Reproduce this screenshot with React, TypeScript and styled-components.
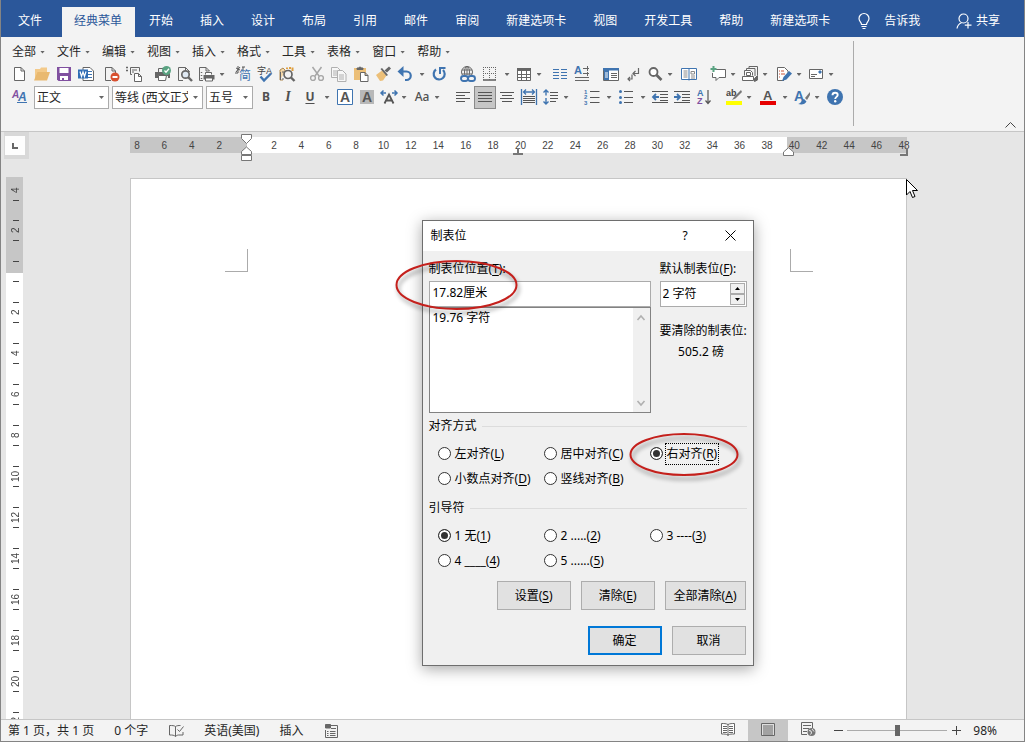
import React from 'react';
import styled, { createGlobalStyle, css } from 'styled-components';

const GREY = '#666666';
const BLUE = '#3f74b0';
const UI_FONT = '"Noto Sans", "Noto Sans CJK SC", sans-serif';

const GlobalStyle = createGlobalStyle`
  *, *::before, *::after { box-sizing: border-box; }
  body { margin: 0; font: 12px/18px ${UI_FONT}; color: #262626; }
  button, input, select { font: inherit; color: inherit; margin: 0; }
  button { border: 0; padding: 0; background: none; cursor: default; }
  svg { display: block; flex: none; overflow: visible; }
  u { text-underline-offset: 2px; }
`;

/* ---------- window frame ---------- */

const Window = styled.div`
  display: flex;
  flex-direction: column;
  height: 100vh;
  min-height: 600px;
  overflow: hidden;
  background: #f3f3f3;
  border: 1px solid #848484;
  border-top: 0;
`;

/* ---------- ribbon tabs ---------- */

const TabBar = styled.nav`
  display: flex;
  flex: none;
  height: 37px;
  padding-top: 7px;
  background: #2b579a;
  color: #fff;
`;

const FileTab = styled.button`
  padding: 0 20px 3px 17px;
`;

const ActiveTab = styled.button`
  padding: 0 13px 3px 12px;
  background: #f3f3f3;
  color: #2b579a;
`;

const TabList = styled.div`
  display: flex;
  gap: 27px;
  padding-left: 14px;
`;

const Tab = styled.button`
  padding-bottom: 3px;
  white-space: nowrap;
`;

const TellMe = styled(Tab)`
  display: flex;
  align-items: center;
  gap: 12px;
  margin-left: 26px;
`;

const Share = styled(Tab)`
  display: flex;
  align-items: center;
  gap: 4px;
  margin: 0 24px 0 auto;
`;

/* ---------- ribbon body ---------- */

const Ribbon = styled.div`
  display: flex;
  flex: none;
  height: 95px;
  border-bottom: 1px solid #c6c6c6;
`;

const Tools = styled.div`
  flex: none;
  width: 853px;
  height: 85px;
  margin-top: 4px;
  border-right: 1px solid #ababab;
`;

const MenuRow = styled.div`
  display: flex;
  height: 22px;
  gap: 12px;
  padding-left: 11px;
`;

const MenuButton = styled.button`
  display: flex;
  align-items: center;
  gap: 4px;
`;

const Arrow = styled.span`
  flex: none;
  width: 5px;
  height: 3px;
  background: ${GREY};
  clip-path: polygon(0 0, 100% 0, 50% 100%);
`;

const ToolRow = styled.div`
  display: flex;
  align-items: center;
  height: 23px;
  padding-left: 8px;
`;

const ToolButton = styled.button<{ $on?: boolean }>`
  display: flex;
  flex: none;
  align-items: center;
  justify-content: center;
  width: 22px;
  height: 23px;
  padding-bottom: 1px;
  ${(p) =>
    p.$on &&
    css`
      background: #c6c6c6;
      border: 1px solid #8a8a8a;
    `}
`;

const DropButton = styled.button`
  display: flex;
  flex: none;
  align-items: center;
  justify-content: center;
  width: 8px;
  height: 22px;
`;

const Gap = styled.span<{ $w: number }>`
  flex: none;
  width: ${(p) => p.$w}px;
`;

const LetterButton = styled(ToolButton)<{ $look: 'bold' | 'italic' | 'underline' | 'case' }>`
  color: #505050;
  font-weight: 700;
  ${(p) => p.$look === 'italic' && css`font-family: "Liberation Serif", serif; font-style: italic; font-size: 14px;`}
  ${(p) => p.$look === 'underline' && css`text-decoration: underline; text-underline-offset: 2px;`}
  ${(p) => p.$look === 'case' && css`font-weight: 500;`}
`;

const ComboBox = styled.span<{ $w: number }>`
  position: relative;
  display: flex;
  flex: none;
  width: ${(p) => p.$w}px;
  height: 23px;
  margin-left: 3px;
  background: #fff;
  border: 1px solid #ababab;

  select {
    appearance: none;
    width: 100%;
    padding: 0 14px 0 2px;
    border: 0;
    background: transparent;
    color: #262626;
  }

  ${Arrow} {
    position: absolute;
    top: 9px;
    right: 4px;
  }
`;

const Collapse = styled.button`
  align-self: flex-end;
  margin: 0 8px 3px auto;
`;

/* ---------- work area ---------- */

const Workspace = styled.main`
  position: relative;
  display: grid;
  flex: 1 1 0;
  grid-template-columns: 28px minmax(0, 1fr);
  grid-template-rows: 45px minmax(0, 1fr);
  min-height: 0;
  background: #e6e6e6;
`;

const TabKind = styled.button`
  display: flex;
  align-items: center;
  justify-content: center;
  width: 25px;
  height: 27px;
  margin-left: 3px;
  background: #fdfdfd;
  border: 4px solid #d8d8d8;
  border-left-width: 1px;
`;

const Lane = styled.div`
  display: flex;
  justify-content: center;
  min-width: 0;
  padding-right: 16px;
`;

const Ruler = styled.div`
  position: relative;
  display: flex;
  justify-content: space-between;
  width: 777px;
  max-width: 100%;
  height: 16px;
  margin-top: 5px;
  padding: 0 3px 0 7px;
  background: linear-gradient(
    to right,
    #c6c6c6 117px,
    #fff 117px,
    #fff calc(100% - 120px),
    #c6c6c6 calc(100% - 120px)
  );
  font: 10px/18px "Liberation Sans", sans-serif;
  color: #444;
`;

const RulerNumber = styled.span`
  display: flex;
  justify-content: center;
  width: 0;
`;

const Marker = styled.svg<{ $left: string; $top: number }>`
  position: absolute;
  left: ${(p) => p.$left};
  top: ${(p) => p.$top}px;
`;

const SideRuler = styled.div`
  width: 17px;
  min-height: 0;
  margin-left: 5px;
  overflow: hidden;
  background: linear-gradient(#c6c6c6 96px, #fff 96px);
  font: 10px/14px "Liberation Sans", sans-serif;
  color: #444;
`;

const SideCell = styled.div<{ $first?: boolean }>`
  display: flex;
  flex-direction: column;
  align-items: center;
  justify-content: space-between;
  height: ${(p) => (p.$first ? 33 : 41)}px;
  padding: ${(p) => (p.$first ? '3px 0 9px' : '10px 0')};
  padding-left: 3px;

  span {
    display: flex;
    align-items: center;
    justify-content: center;
    flex: 1;
    writing-mode: vertical-rl;
    transform: rotate(180deg);
  }
  &::before,
  &::after {
    content: '';
    flex: none;
    width: 6px;
    height: 1px;
    background: #444;
  }
  &::before {
    visibility: ${(p) => (p.$first ? 'hidden' : 'visible')};
  }
`;

const Page = styled.div`
  display: flex;
  position: relative;
  align-items: flex-start;
  justify-content: space-between;
  width: 777px;
  max-width: 100%;
  margin-top: 1px;
  padding: 70px 93px 0 94px;
  background: #fff;
  border: 1px solid #c6c6c6;
  border-bottom: 0;
`;

const Crop = styled.span<{ $side: 'left' | 'right' }>`
  width: 23px;
  height: 23px;
  border-bottom: 1px solid #ababab;
  ${(p) => (p.$side === 'left' ? 'border-right' : 'border-left')}: 1px solid #ababab;
`;

const Pointer = styled.svg`
  position: absolute;
  top: 0;
  right: -12px;
`;

/* ---------- dialog ---------- */

const Dialog = styled.section`
  position: absolute;
  top: 88px;
  left: calc(50% - 91px);
  width: 332px;
  padding-bottom: 10px;
  background: #f0f0f0;
  border: 1px solid #6e6e6e;
  box-shadow: 0 3px 14px rgba(0, 0, 0, 0.35);
  color: #000;
`;

const TitleBar = styled.header`
  display: flex;
  align-items: center;
  height: 30px;
  padding-left: 8px;
  background: #fff;

  h2 {
    flex: 1;
    margin: 0;
    font-size: 12px;
    line-height: 18px;
    font-weight: 400;
  }
  button {
    display: flex;
    align-items: center;
    justify-content: center;
    width: 45px;
    height: 30px;
    padding-bottom: 1px;
  }
`;

const Body = styled.form`
  padding: 9px 6px 0;
`;

const Fields = styled.div`
  display: flex;
  gap: 9px;
`;

const PositionField = styled.div`
  flex: 1;
  min-width: 0;
`;

const DefaultField = styled.div`
  flex: none;
  width: 87px;
  white-space: nowrap;
`;

const FieldLabel = styled.label`
  display: block;
  margin-bottom: 3px;
`;

const TextBox = styled.input`
  display: block;
  width: 100%;
  height: 26px;
  padding: 0 3px 4px;
  background: #fff;
  border: 1px solid #ababab;
  outline: 0;
`;

const ListBox = styled.div`
  display: flex;
  height: 106px;
  background: #fff;
  border: 1px solid #828282;

  select {
    flex: 1;
    min-width: 0;
    padding: 0;
    border: 0;
    outline: 0;
    overflow: hidden;
    background: transparent;
  }
  option {
    min-height: 18px;
    padding: 0 3px 1px;
  }
`;

const ScrollRail = styled.div`
  display: flex;
  flex-direction: column;
  align-items: center;
  justify-content: space-between;
  width: 17px;
  padding: 7px 1px 6px 0;
  background: #f0f0f0;
`;

const SpinBox = styled.div`
  display: flex;
  align-items: center;
  height: 26px;
  padding-right: 1px;
  background: #fff;
  border: 1px solid #ababab;

  input {
    flex: 1;
    width: 0;
    height: 22px;
    padding: 0 2px 2px;
    border: 0;
    outline: 0;
    background: transparent;
  }
`;

const SpinButtons = styled.div`
  display: grid;
  grid-template-rows: 11px 11px;

  button {
    display: flex;
    align-items: center;
    justify-content: center;
    width: 15px;
    background: #f0f0f0;
    border: 1px solid #ababab;
  }
`;

const ClearNote = styled.p`
  margin: 15px 0 3px;
`;

const ClearValue = styled.p`
  margin: 0;
  text-align: center;
  padding-right: 4px;
`;

const Group = styled.fieldset`
  min-width: 0;
  margin: 0;
  padding: 4px 0;
  border: 0;
`;

const GroupTitle = styled.legend`
  display: flex;
  align-items: center;
  gap: 5px;
  width: 100%;
  padding: 4px 0 0;

  &::after {
    content: '';
    flex: 1;
    height: 1px;
    background: #dcdcdc;
  }
`;

const Choices = styled.div`
  display: grid;
  grid-template-columns: 106px 106px 1fr;
  grid-auto-rows: 25px;
  padding: 2px 0 0 9px;
`;

const Choice = styled.label<{ $focus?: boolean }>`
  display: flex;
  align-items: center;
  gap: 4px;
  white-space: nowrap;

  input {
    appearance: none;
    flex: none;
    width: 13px;
    height: 13px;
    background: #fff;
    border: 1px solid #333;
    border-radius: 50%;
  }
  input:checked {
    background: #333;
    box-shadow: inset 0 0 0 2px #fff;
  }
  span {
    ${(p) => p.$focus && css`outline: 1px dotted #000; outline-offset: 1px;`}
  }
`;

const Actions = styled.div<{ $top: number }>`
  display: flex;
  justify-content: flex-end;
  gap: 10px;
  margin: ${(p) => p.$top}px 1px 0 0;
`;

const PushButton = styled.button<{ $primary?: boolean }>`
  min-width: 74px;
  height: 29px;
  padding: 0 8px;
  background: #e1e1e1;
  border: ${(p) => (p.$primary ? '2px solid #0078d7' : '1px solid #adadad')};
`;

const Ring = styled.svg<{ $left: number; $top: number }>`
  position: absolute;
  left: ${(p) => p.$left}px;
  top: ${(p) => p.$top}px;
  pointer-events: none;
  filter: drop-shadow(2px 4px 2px rgba(0, 0, 0, 0.4));
`;

/* ---------- status bar ---------- */

const StatusBar = styled.footer`
  display: flex;
  flex: none;
  align-items: center;
  height: 22px;
  padding-left: 7px;
  border-top: 1px solid #c6c6c6;
`;

const StatusGroup = styled.div`
  display: flex;
  flex: 1;
  align-items: center;
  gap: 20px;
  white-space: nowrap;
`;

const ViewButton = styled.button<{ $on?: boolean }>`
  display: flex;
  align-items: center;
  justify-content: center;
  width: 40px;
  height: 21px;
  padding-bottom: 3px;
  background: ${(p) => (p.$on ? '#c6c6c6' : 'transparent')};
`;

const ZoomButton = styled.button`
  display: flex;
  align-items: center;
  justify-content: center;
  width: 12px;
  height: 21px;
`;

const ZoomSlider = styled.input`
  appearance: none;
  width: 100px;
  height: 12px;
  margin: 0 3px;
  background: linear-gradient(#ababab, #ababab) center / 100% 1px no-repeat;

  &::-webkit-slider-thumb {
    appearance: none;
    width: 5px;
    height: 11px;
    background: #666;
  }
`;

const ZoomValue = styled.span`
  margin: 0 27px 0 11px;
`;

/* ---------- icons ---------- */

const L = 'Liberation Sans, sans-serif';

const glyphs = {
  blank: <path d="M2.5 1.5h6.5l3.5 3.5v9.5h-10zM9 1.5v3.5h3.5" fill="#fff" />,
  open: (
    <g stroke="none">
      <path d="M1 14V3h5l1-1.5h6V6" fill="#f3ca8a" />
      <path d="M0 14.5L3.5 6H16l-3 8.5z" fill="#e9b970" />
    </g>
  ),
  save: (
    <g stroke="none">
      <path d="M1 1h14v14H2.5L1 13.5z" fill="#8050a0" />
      <path d="M3.5 2h9v5h-9zM4 10h8v4H8v-2H6v2H4z" fill="#fff" />
    </g>
  ),
  word: (
    <>
      <path d="M5 1.5h7l3.5 3.5v9.5H5z" fill="#fff" />
      <path d="M10 5.5h4M10 8.5h4M10 11.5h4" stroke={BLUE} />
      <path d="M0 3.5h10v9H0z" fill="#2f6db5" stroke="none" />
      <path d="M2 5.5l1.500 5L5 6l1.500 4.500 1.500-5" stroke="#fff" strokeWidth="1.2" />
    </>
  ),
  docRemove: (
    <>
      <path d="M7 14.5H1.500v-13H8l3.500 3.500v2M8 1.5v3.500h3.500" />
      <circle cx="11" cy="11" r="4.5" fill="#d8502f" stroke="none" />
      <path d="M8.5 11h5" stroke="#fff" strokeWidth="2" />
    </>
  ),
  docGroup: (
    <>
      <path d="M0 1.5h2M0 4.5h2" strokeWidth="1.5" />
      <path d="M6 8.5H4.500v-7h9v4" />
      <path d="M6 4h5M6 6h2" />
      <path d="M8.5 7.5h4l3 3v5h-7zM12.5 7.5v3h3" fill="#fff" />
    </>
  ),
  printCheck: (
    <>
      <path d="M3.5 6V2.5H9" />
      <path d="M0 6h15v6h-2v-2H3v2H0z" fill={GREY} stroke="none" />
      <path d="M3.5 9.5h8l-1 5h-7z" fill="#fff" />
      <circle cx="11.5" cy="4.5" r="4.5" fill="#5aa382" stroke="none" />
      <path d="M9.5 4.5l1.500 1.700 3-3.400" stroke="#fff" strokeWidth="1.3" />
    </>
  ),
  preview: (
    <>
      <path d="M6 14.5H1.500v-13h7l4 4V6M8.5 1.5v4h4" />
      <circle cx="8.5" cy="8.5" r="3.7" fill="#dfe9f3" strokeWidth="1.7" />
      <path d="M11 11l4 4" strokeWidth="2.4" />
    </>
  ),
  printDoc: (
    <>
      <path d="M4 14.5H.5v-13H7l3.500 3.500M7 1.5v3.500h3.500" />
      <path d="M2.5 6v1M2.5 9v1M2.5 12v1" strokeWidth="1.5" />
      <path d="M4.5 9h11v4.500h-11z" fill={GREY} stroke="none" />
      <path d="M6.5 8.5v-2h6v2M6.5 12h7v3h-7z" fill="#fff" />
    </>
  ),
  simplify: (
    <>
      <path d="M1 2l4 2M5 1L1 6M3 0v7M0 7h3" stroke="#555" />
      <path d="M7 1h3M8 1v3" stroke="#555" />
      <text x="4" y="14" fontSize="12" fill={BLUE} stroke="none" fontFamily="Noto Sans CJK SC, sans-serif">简</text>
    </>
  ),
  spelling: (
    <>
      <text x="0" y="8" fontSize="9" fill="#444" stroke="none" fontFamily="Noto Sans CJK SC, sans-serif">字</text>
      <text x="9" y="8" fontSize="9" fill="#444" stroke="none" fontFamily={L}>A</text>
      <path d="M3.5 10.5l3.500 4 7-7" stroke={BLUE} strokeWidth="2.4" />
    </>
  ),
  research: (
    <>
      <path d="M1 14V4l3-2 2 2v2M4 14H1" fill="#f3d7a8" stroke="#b08a50" />
      <path d="M8 3V1.500M11 3V1M13.500 5V1.500" stroke="#e0a040" strokeWidth="2" />
      <path d="M1.500 6v8M4 5v2M4 12v2" />
      <circle cx="9" cy="8.500" r="4" fill="#f3f3f3" strokeWidth="1.700" />
      <path d="M12 11.500l3.500 3.500" strokeWidth="2.400" />
    </>
  ),
  cut: (
    <g stroke="#a6a6a6">
      <path d="M3.500 1l6.500 9M12.500 1L6 10" strokeWidth="1.500" />
      <circle cx="4" cy="12" r="2.400" strokeWidth="1.400" />
      <circle cx="12" cy="12" r="2.400" strokeWidth="1.400" />
    </g>
  ),
  copy: (
    <g stroke="#b0b0b0">
      <path d="M.5 1.500h6l3 3v7h-9z" fill="#f7f7f7" />
      <path d="M2 5h4M2 7h4M2 9h4" />
      <path d="M6.500 4.500h5l3.500 3.500v7.500H6.500z" fill="#f7f7f7" />
      <path d="M8 9h5M8 11h5M8 13h5" />
    </g>
  ),
  paste: (
    <>
      <path d="M1 2h12v12H1z" fill="#ecbf78" stroke="none" />
      <path d="M4 3.500V2h2a1 1 0 012 0h2v1.500z" fill={GREY} stroke={GREY} />
      <path d="M7.500 6.500h4.500l3 3v6H7.500zM12 6.500v3h3" fill="#fff" />
    </>
  ),
  brush: (
    <g stroke="none">
      <path d="M1 9l6-4.500 4.500 5L8 14.500l-3 .5z" fill="#ecbf78" />
      <path d="M5.500 3l1.500-1 6 7-1.500 1z" fill={GREY} />
      <path d="M9.500 4.500L14 .5l2 2-4 4z" fill={GREY} />
    </g>
  ),
  undo: (
    <>
      <path d="M3 5.500h6.500a4 4 0 010 8.500H8" stroke={BLUE} strokeWidth="2.200" />
      <path d="M6.500 0v11L.5 5.500z" fill={BLUE} stroke="none" />
    </>
  ),
  redo: (
    <>
      <path d="M5 3.500a5.500 5.500 0 107 .5" stroke={BLUE} strokeWidth="2.200" />
      <path d="M9 8V2h5.500" stroke={BLUE} strokeWidth="2" />
    </>
  ),
  link: (
    <>
      <circle cx="7" cy="6" r="5.500" />
      <ellipse cx="7" cy="6" rx="2.500" ry="5.500" />
      <path d="M2 4h10M2 8h10M7 .5v10" />
      <path d="M1 9h15v6H1z" fill="#f3f3f3" stroke="none" />
      <rect x="1" y="10" width="7" height="5" rx="2.500" stroke={BLUE} strokeWidth="1.900" />
      <rect x="8" y="10" width="7" height="5" rx="2.500" stroke={BLUE} strokeWidth="1.900" />
    </>
  ),
  borders: (
    <>
      <path d="M1.500 1v13M7.500 1v13M13.500 1v13M1 1.500h13M1 7.500h13" strokeDasharray="1 1" />
      <path d="M1 14h13" strokeWidth="1.600" />
    </>
  ),
  table: (
    <>
      <path d="M1.500 2.500h13v12h-13z" fill="#fff" />
      <path d="M1 2h14v3H1z" fill={GREY} stroke="none" />
      <path d="M1.500 8.500h13M1.500 11.500h13M5.500 5v9M10.500 5v9" />
    </>
  ),
  columns: <path d="M1 3.500h6M1 6.500h6M1 9.500h6M1 12.500h6M9 3.500h6M9 6.500h6M9 9.500h6M9 12.500h6" stroke={BLUE} strokeWidth="1.200" />,
  dropCap: (
    <>
      <text x="0" y="8" fontSize="11" fontWeight="700" fill={BLUE} stroke="none" fontFamily={L}>A</text>
      <path d="M9 2.500h6M9 7.500h6M1 11.500h14M1 14.500h14M13.500 0v5M13.500 6v4" />
    </>
  ),
  navPane: (
    <>
      <path d="M.5 2.500h15v12H.5z" fill="#fff" />
      <path d="M0 2h16v2.500H0zM1 4h5v10H1z" fill={BLUE} stroke="none" />
      <path d="M2 7h3M2 9h3M2 11h3" stroke="#fff" />
      <path d="M8 7.500h6M8 9.500h6M8 11.500h6" />
    </>
  ),
  marks: (
    <>
      <path d="M13.500 2v5.500H8M10.500 5L8 7.500l2.500 2.500" strokeWidth="1.200" />
      <path d="M7 8.500v4.500H3M5 11l-2 2 2 2" strokeWidth="1.200" />
    </>
  ),
  zoom: (
    <>
      <circle cx="6.500" cy="6" r="4" fill="#fff" strokeWidth="1.800" />
      <path d="M9.500 9l5 5" strokeWidth="2.600" />
    </>
  ),
  book: (
    <>
      <path d="M.5 2.500h15v11H.5zM8 2.500v12" stroke={BLUE} fill="#fff" />
      <path d="M2.500 5h4M2.500 7h4M2.500 9h4M2.500 11h4M10 5.500h3.500v2.500H10zM10 10h4M10 12h4" stroke="#8a8a8a" />
    </>
  ),
  comment: (
    <>
      <path d="M5.500 3.500h10v8H9l-3 3v-3H2.500V7" fill="#fff" />
      <path d="M3.500 0v6M.5 3h6" stroke="#5aa382" strokeWidth="2" />
    </>
  ),
  merge: (
    <>
      <path d="M7 2V.5h8.500V9M4.500 4.500v-2h8.500V10" />
      <path d="M2.500 9.500v-5h6l2 2v3M.5 10.500h11v4H.5z" fill="#fff" />
      <path d="M4.500 6.500h4v3h-4z" />
      <path d="M12.500 12.500l3-3v4.500l-3 1.500z" fill={GREY} />
    </>
  ),
  review: (
    <>
      <path d="M8 14.500H1.500v-13h7l3.500 3.500v2" fill="#fff" />
      <path d="M3 5h1M3 8h1M3 11h1M5 5h3M5 8h4" stroke="#c8553d" strokeWidth="1.200" />
      <path d="M6 15l1.500-4L13 5l3 2.500-5.500 6z" fill={BLUE} stroke="none" />
    </>
  ),
  mail: (
    <>
      <path d="M1.500 3.500h13v9h-13z" fill="#fff" />
      <path d="M3 8.500h6M3 10.500h4" />
      <path d="M11 5h2v2h-2z" fill={BLUE} stroke={BLUE} />
    </>
  ),
  styles: (
    <>
      <text x="0" y="9" fontSize="10" fontStyle="italic" fontWeight="700" fill="#8050a0" stroke="none" fontFamily={L}>A</text>
      <text x="6" y="12" fontSize="12" fontStyle="italic" fontWeight="700" fill={BLUE} stroke="none" fontFamily={L}>A</text>
      <path d="M5 13.500h10" stroke={BLUE} />
    </>
  ),
  charBorder: (
    <>
      <path d="M.5 .5h15v15H.5z" fill="#fff" stroke={BLUE} />
      <text x="3" y="13" fontSize="14" fontWeight="700" fill="#555" stroke="none" fontFamily={L}>A</text>
    </>
  ),
  charShade: (
    <>
      <path d="M1 1h14v14H1z" fill="#b8b8b8" stroke="none" />
      <text x="3" y="13" fontSize="14" fontWeight="700" fill="#555" stroke="none" fontFamily={L}>A</text>
    </>
  ),
  charScale: (
    <>
      <path d="M3.500 14.500L8 5.500l4.500 9M5.500 11.500h5" strokeWidth="1.800" stroke="#555" />
      <path d="M0 4h5M11 4h5M2.500 1.500L0 4l2.500 2.500M13.500 1.500L16 4l-2.500 2.500" stroke={BLUE} strokeWidth="1.500" />
    </>
  ),
  alignLeft: <path d="M1 3.500h14M1 6.500h9M1 9.500h14M1 12.500h9" stroke="#555" />,
  justify: <path d="M1 3.500h14M1 6.500h14M1 9.500h14M1 12.500h14" stroke="#555" />,
  alignCenter: <path d="M1 3.500h14M3 6.500h10M1 9.500h14M3 12.500h10" stroke="#555" />,
  distribute: (
    <>
      <path d="M.5 0v16M15.500 0v16M3 3h10M5 .5L2.500 3 5 5.500M11 .5L13.500 3 11 5.500" stroke={BLUE} strokeWidth="1.300" />
      <path d="M2 7.500h12M2 9.500h12M2 11.500h12M2 13.500h12" stroke="#555" />
    </>
  ),
  lineSpacing: (
    <>
      <path d="M3 1v5.500M3 9v6M.5 3.500L3 1l2.500 2.500M.5 12.500L3 15l2.500-2.500" stroke={BLUE} strokeWidth="1.400" />
      <path d="M7 3.500h8M7 6.500h8M7 9.500h8M7 12.500h6" stroke="#555" />
    </>
  ),
  numbers: (
    <>
      <g fontSize="6" fill={BLUE} stroke="none" fontFamily={L} fontWeight="700">
        <text x="0" y="5">1</text>
        <text x="0" y="10">2</text>
        <text x="0" y="16">3</text>
      </g>
      <path d="M6 2.500h9.500M6 8.500h9.500M6 13.500h9.500" stroke="#555" />
    </>
  ),
  bullets: (
    <>
      <g fill={BLUE} stroke="none">
        <circle cx="2.500" cy="2.500" r="1.500" />
        <circle cx="2.500" cy="8.500" r="1.500" />
        <circle cx="2.500" cy="13.500" r="1.500" />
      </g>
      <path d="M6 2.500h9M6 8.500h9M6 13.500h9" stroke="#555" />
    </>
  ),
  outdent: (
    <>
      <path d="M0 2.500h16M8 5.500h8M8 8.500h8M8 11.500h8M0 13.500h16" stroke="#555" />
      <path d="M1 8h6M4 5L1 8l3 3" stroke={BLUE} strokeWidth="1.800" />
    </>
  ),
  indent: (
    <>
      <path d="M0 2.500h16M8 5.500h8M8 8.500h8M8 11.500h8M0 13.500h16" stroke="#555" />
      <path d="M0 8h6M3 5l3 3-3 3" stroke={BLUE} strokeWidth="1.800" />
    </>
  ),
  sort: (
    <>
      <text x="1" y="7" fontSize="9" fontWeight="700" fill={BLUE} stroke="none" fontFamily={L}>A</text>
      <text x="1" y="15" fontSize="9" fontWeight="700" fill="#8050a0" stroke="none" fontFamily={L}>Z</text>
      <path d="M12 1v13M9.500 11.500L12 14.500l2.500-3" stroke="#555" strokeWidth="1.200" />
    </>
  ),
  highlight: (
    <>
      <text x="0" y="7" fontSize="9" fontWeight="700" fill="#444" stroke="none" fontFamily={L}>ab</text>
      <path d="M15 1l-7 7-2 3 3.500-1.500L16 3z" fill="#777" stroke="none" />
      <path d="M0 12h16v4H0z" fill="#ffff00" stroke="none" />
    </>
  ),
  fontColor: (
    <>
      <text x="3" y="11" fontSize="13" fontWeight="700" fill="#555" stroke="none" fontFamily={L}>A</text>
      <path d="M0 12h16v4H0z" fill="#e60000" stroke="none" />
    </>
  ),
  effects: (
    <>
      <text x="0" y="12" fontSize="14" fontWeight="700" fill={BLUE} stroke="none" fontFamily={L}>A</text>
      <path d="M16 3l-5 6 2 2 3-5z" fill="#777" stroke="none" />
      <path d="M4 15c3 0 3-4 6-5l2.500 2.500C11 15.500 8 16 4 15z" fill={BLUE} stroke="none" />
    </>
  ),
  help: (
    <>
      <circle cx="8" cy="8" r="8" fill={BLUE} stroke="none" />
      <path d="M5.500 6.200c0-3.400 5.200-3.200 5.200-.2 0 1.800-2.500 2-2.500 4" stroke="#fff" strokeWidth="1.900" />
      <circle cx="8.200" cy="12.200" r="1.200" fill="#fff" stroke="none" />
    </>
  ),
  bulb: (
    <g stroke="#fff" strokeWidth="1.200">
      <path d="M5.500 11.500c0-2.500-2.500-3-2.500-6a5 5 0 0110 0c0 3-2.500 3.500-2.500 6zM5.500 13.500h5M6.500 15.500h3" />
    </g>
  ),
  person: (
    <g stroke="#fff" strokeWidth="1.200">
      <circle cx="7.500" cy="5.500" r="4.500" />
      <path d="M1 15.500c.5-3.500 2.500-5 4.500-5.800M12 9v6.500M8.800 12.200h6.700" />
    </g>
  ),
  proof: <path d="M7.500 3.500c-1.500-1-3-1-6-1v9.500c3 0 4.500 0 6 1.500V3.500c1.500-1 3-1 5-1M7.500 13.500c1-1 2-1.500 3-1.500h4.500V9M9.500 6.500l2 2 4-5" />,
  macro: (
    <>
      <path d="M6 2.500h8.500v12h-12V7" />
      <path d="M2.500 5V1.500h5V5z" fill={GREY} />
      <path d="M4 8.500h1.500M7 8.500h5.500M4 10.500h1.500M7 10.500h5.500M4 12.500h1.500M7 12.500h5.500M8 5.500h5" />
    </>
  ),
  readView: (
    <>
      <path d="M8 3.500c-2-1-4-1-6.500-1v10.500c3 0 4.500 0 6.500 1 2-1 3.500-1 6.500-1V2.500c-2.500 0-4.500 0-6.500 1z" fill="#fff" />
      <path d="M8 3.500V15M3 5.500h4M3 7.500h4M3 9.500h4M3 11.500h4M9 5.500h4M9 7.500h4M9 9.500h4M9 11.500h4" />
    </>
  ),
  printView: (
    <>
      <path d="M1.500 2.500h13v12h-13z" fill="#ddd" />
      <path d="M3 5h10M3 7h10M3 9h10M3 11h10M3 13h10" />
    </>
  ),
  webView: (
    <>
      <path d="M7 13.500H1.500v-12h11V7M3 4.500h8M3 7.500h6M3 10.500h4" />
      <circle cx="11.500" cy="11" r="4" fill="#777" stroke="none" />
      <path d="M9 9.500l2 .5.5 2-1 1.500M12 8l2 2.500" stroke="#eee" />
    </>
  ),
};

type GlyphName = keyof typeof glyphs;

const Icon = ({ name }: { name: GlyphName }) => (
  <svg width="16" height="16" viewBox="0 0 16 16" fill="none" stroke={GREY} aria-hidden="true">
    {glyphs[name]}
  </svg>
);

/* ---------- data ---------- */

const tabs = ['开始', '插入', '设计', '布局', '引用', '邮件', '审阅', '新建选项卡', '视图', '开发工具', '帮助', '新建选项卡'];
const menus = ['全部', '文件', '编辑', '视图', '插入', '格式', '工具', '表格', '窗口', '帮助'];

/* A number is a gap in pixels; 'v' is a drop-down arrow. */
type ToolItem = GlyphName | number | 'v';

const standardTools: ToolItem[] = [
  'blank', 'open', 'save', 'word', 4, 'docRemove', 'docGroup', 7,
  'printCheck', 'preview', 'printDoc', 'v', 6, 'simplify', 'spelling', 'research', 8,
  'cut', 'copy', 'paste', 'brush', 'undo', 2, 'v', 2, 'redo', 7,
  'link', 'borders', 2, 'v', 2, 'table', 'v', 6, 'columns', 'dropCap', 7,
  'navPane', 'marks', 'zoom', 'v', 4, 'book', 7, 'comment', 'v', 2,
  'merge', 'v', 4, 'review', 'v', 2, 'mail', 'v',
];

const formatTools: ToolItem[] = [
  2, 'v', 3, 'charBorder', 'charShade', 'charScale', 'v', 3,
];

const paragraphTools: ToolItem[] = [
  'v', 11, 'alignLeft', 'justify', 'alignCenter', 'distribute', 'lineSpacing', 'v', 11,
  'numbers', 2, 'v', 2, 'bullets', 2, 'v', 2, 'outdent', 'indent', 'sort', 8,
  'highlight', 'v', 4, 'fontColor', 2, 'v', 2, 'effects', 'v', 3, 'help',
];

const ToolStrip = ({ items }: { items: ToolItem[] }) => (
  <>
    {items.map((item, i) => {
      if (typeof item === 'number') return <Gap key={i} $w={item} />;
      if (item === 'v') return <DropButton key={i} aria-label="更多"><Arrow /></DropButton>;
      return (
        <ToolButton key={i} aria-label={item} $on={item === 'justify'}>
          <Icon name={item} />
        </ToolButton>
      );
    })}
  </>
);

const rulerNumbers = Array.from({ length: 29 }, (_, i) => Math.abs(i * 2 - 8));
const sideNumbers = Array.from({ length: 14 }, (_, i) => Math.abs(i * 2 - 4));

const alignments = [
  { text: '左对齐', key: 'L' },
  { text: '居中对齐', key: 'C' },
  { text: '右对齐', key: 'R' },
  { text: '小数点对齐', key: 'D' },
  { text: '竖线对齐', key: 'B' },
];

const leaders = [
  { text: '1 无', key: '1' },
  { text: '2 .....', key: '2' },
  { text: '3 ----', key: '3' },
  { text: '4 ____', key: '4' },
  { text: '5 ......', key: '5' },
];

const Combo = ({ label, value, width }: { label: string; value: string; width: number }) => (
  <ComboBox $w={width}>
    <select aria-label={label} defaultValue={value}>
      <option>{value}</option>
    </select>
    <Arrow />
  </ComboBox>
);

const Key = ({ children }: { children: string }) => <>(<u>{children}</u>)</>;

const RulerMarkers = () => (
  <>
    <Marker $left="111px" $top={-3} width="11" height="28" viewBox="0 0 11 28" fill="#fff" stroke="#777">
      <path d="M.5 .5h10v4l-5 5-5-5z" />
      <path d="M5.500 13l5 4.500v3H.5v-3z" />
      <path d="M.5 21.500h10v5H.5z" />
    </Marker>
    <Marker $left="383px" $top={11} width="10" height="8" viewBox="0 0 10 8" fill="#777">
      <path d="M4 0h2v5h4v2H0V5h4z" />
    </Marker>
    <Marker $left="calc(100% - 124px)" $top={10} width="11" height="9" viewBox="0 0 11 9" fill="#fff" stroke="#777">
      <path d="M5.500 .7l5 4.300v3.500H.5V5z" />
    </Marker>
    <Marker $left="calc(100% - 7px)" $top={11} width="8" height="8" viewBox="0 0 8 8" fill="#777">
      <path d="M6 0h2v8H0V6h6z" />
    </Marker>
  </>
);

const TabStopsDialog = () => (
  <Dialog role="dialog" aria-labelledby="dialog-title">
    <TitleBar>
      <h2 id="dialog-title">制表位</h2>
      <button aria-label="帮助">?</button>
      <button aria-label="关闭">
        <svg width="11" height="11" viewBox="0 0 11 11" stroke="#000" fill="none">
          <path d="M.5 .5l10 10M10.500 .5l-10 10" />
        </svg>
      </button>
    </TitleBar>
    <Body onSubmit={(e) => e.preventDefault()}>
      <Fields>
        <PositionField>
          <FieldLabel htmlFor="position">制表位位置<Key>T</Key>:</FieldLabel>
          <TextBox id="position" defaultValue="17.82厘米" />
          <ListBox>
            <select size={5} aria-label="制表位列表">
              <option>19.76 字符</option>
            </select>
            <ScrollRail>
              <svg width="8" height="6" viewBox="0 0 8 6" fill="none" stroke="#b0b0b0" strokeWidth="1.600">
                <path d="M.5 5L4 1l3.500 4" />
              </svg>
              <svg width="8" height="6" viewBox="0 0 8 6" fill="none" stroke="#b0b0b0" strokeWidth="1.600">
                <path d="M.5 1L4 5l3.500-4" />
              </svg>
            </ScrollRail>
          </ListBox>
        </PositionField>
        <DefaultField>
          <FieldLabel htmlFor="default">默认制表位<Key>F</Key>:</FieldLabel>
          <SpinBox>
            <input id="default" defaultValue="2 字符" />
            <SpinButtons>
              <button type="button" aria-label="增加">
                <svg width="5" height="3" viewBox="0 0 5 3"><path d="M0 3l2.500-3L5 3z" /></svg>
              </button>
              <button type="button" aria-label="减少">
                <svg width="5" height="3" viewBox="0 0 5 3"><path d="M0 0l2.500 3L5 0z" /></svg>
              </button>
            </SpinButtons>
          </SpinBox>
          <ClearNote>要清除的制表位:</ClearNote>
          <ClearValue>505.2 磅</ClearValue>
        </DefaultField>
      </Fields>
      <Group>
        <GroupTitle>对齐方式</GroupTitle>
        <Choices>
          {alignments.map(({ text, key }) => (
            <Choice key={key} $focus={key === 'R'}>
              <input type="radio" name="alignment" defaultChecked={key === 'R'} />
              <span>{text}<Key>{key}</Key></span>
            </Choice>
          ))}
        </Choices>
      </Group>
      <Group>
        <GroupTitle>引导符</GroupTitle>
        <Choices>
          {leaders.map(({ text, key }) => (
            <Choice key={key}>
              <input type="radio" name="leader" defaultChecked={key === '1'} />
              <span>{text}<Key>{key}</Key></span>
            </Choice>
          ))}
        </Choices>
      </Group>
      <Actions $top={4}>
        <PushButton type="button">设置<Key>S</Key></PushButton>
        <PushButton type="button">清除<Key>E</Key></PushButton>
        <PushButton type="button">全部清除<Key>A</Key></PushButton>
      </Actions>
      <Actions $top={16}>
        <PushButton $primary>确定</PushButton>
        <PushButton type="button">取消</PushButton>
      </Actions>
    </Body>
    <Ring $left={-27} $top={39} width="121" height="50" fill="none" stroke="#c4201c" strokeWidth="2">
      <ellipse cx="60.500" cy="25" rx="60" ry="24" />
    </Ring>
    <Ring $left={207} $top={212} width="108" height="43" fill="none" stroke="#c4201c" strokeWidth="2">
      <ellipse cx="54" cy="21.500" rx="53.500" ry="20.500" />
    </Ring>
  </Dialog>
);

const App = () => (
  <>
    <GlobalStyle />
    <Window>
      <TabBar>
        <FileTab>文件</FileTab>
        <ActiveTab>经典菜单</ActiveTab>
        <TabList>
          {tabs.map((t, i) => <Tab key={i}>{t}</Tab>)}
        </TabList>
        <TellMe><Icon name="bulb" />告诉我</TellMe>
        <Share><Icon name="person" />共享</Share>
      </TabBar>

      <Ribbon>
        <Tools>
          <MenuRow>
            {menus.map((m) => <MenuButton key={m}>{m}<Arrow /></MenuButton>)}
          </MenuRow>
          <ToolRow><ToolStrip items={standardTools} /></ToolRow>
          <ToolRow>
            <ToolButton aria-label="样式"><Icon name="styles" /></ToolButton>
            <Combo label="样式" value="正文" width={75} />
            <Combo label="字体" value="等线 (西文正文)" width={91} />
            <Combo label="字号" value="五号" width={47} />
            <Gap $w={2} />
            <LetterButton $look="bold">B</LetterButton>
            <LetterButton $look="italic">I</LetterButton>
            <LetterButton $look="underline">U</LetterButton>
            <ToolStrip items={formatTools} />
            <LetterButton $look="case">Aa</LetterButton>
            <ToolStrip items={paragraphTools} />
          </ToolRow>
        </Tools>
        <Collapse aria-label="折叠功能区">
          <svg width="11" height="6" viewBox="0 0 11 6" fill="none" stroke="#444">
            <path d="M.5 5.500l5-5 5 5" />
          </svg>
        </Collapse>
      </Ribbon>

      <Workspace>
        <TabKind aria-label="左对齐式制表符">
          <svg width="6" height="6" viewBox="0 0 6 6" fill={GREY}><path d="M0 0h2v4h4v2H0z" /></svg>
        </TabKind>
        <Lane>
          <Ruler>
            {rulerNumbers.map((n, i) => <RulerNumber key={i}>{n || ''}</RulerNumber>)}
            <RulerMarkers />
          </Ruler>
        </Lane>
        <SideRuler>
          {sideNumbers.map((n, i) => (
            <SideCell key={i} $first={i === 0}><span>{n || ''}</span></SideCell>
          ))}
        </SideRuler>
        <Lane>
          <Page>
            <Crop $side="left" />
            <Crop $side="right" />
            <Pointer width="12" height="20" viewBox="0 0 12 20" fill="#fff" stroke="#000">
              <path d="M.5 .5v15.500l3.500-3.500 2.500 6 2.500-1-2.500-6h5z" />
            </Pointer>
          </Page>
        </Lane>
        <TabStopsDialog />
      </Workspace>

      <StatusBar>
        <StatusGroup>
          <span>第 1 页，共 1 页</span>
          <span>0 个字</span>
          <Icon name="proof" />
          <span>英语(美国)</span>
          <span>插入</span>
          <Icon name="macro" />
        </StatusGroup>
        <ViewButton aria-label="阅读视图"><Icon name="readView" /></ViewButton>
        <ViewButton $on aria-label="页面视图"><Icon name="printView" /></ViewButton>
        <ViewButton aria-label="Web 版式视图"><Icon name="webView" /></ViewButton>
        <Gap $w={4} />
        <ZoomButton aria-label="缩小">
          <svg width="9" height="9" viewBox="0 0 9 9" stroke="#444"><path d="M0 4.500h9" /></svg>
        </ZoomButton>
        <ZoomSlider type="range" min={0} max={196} defaultValue={98} aria-label="显示比例" />
        <ZoomButton aria-label="放大">
          <svg width="9" height="9" viewBox="0 0 9 9" stroke="#444"><path d="M0 4.500h9M4.500 0v9" /></svg>
        </ZoomButton>
        <ZoomValue>98%</ZoomValue>
      </StatusBar>
    </Window>
  </>
);

export default App;
